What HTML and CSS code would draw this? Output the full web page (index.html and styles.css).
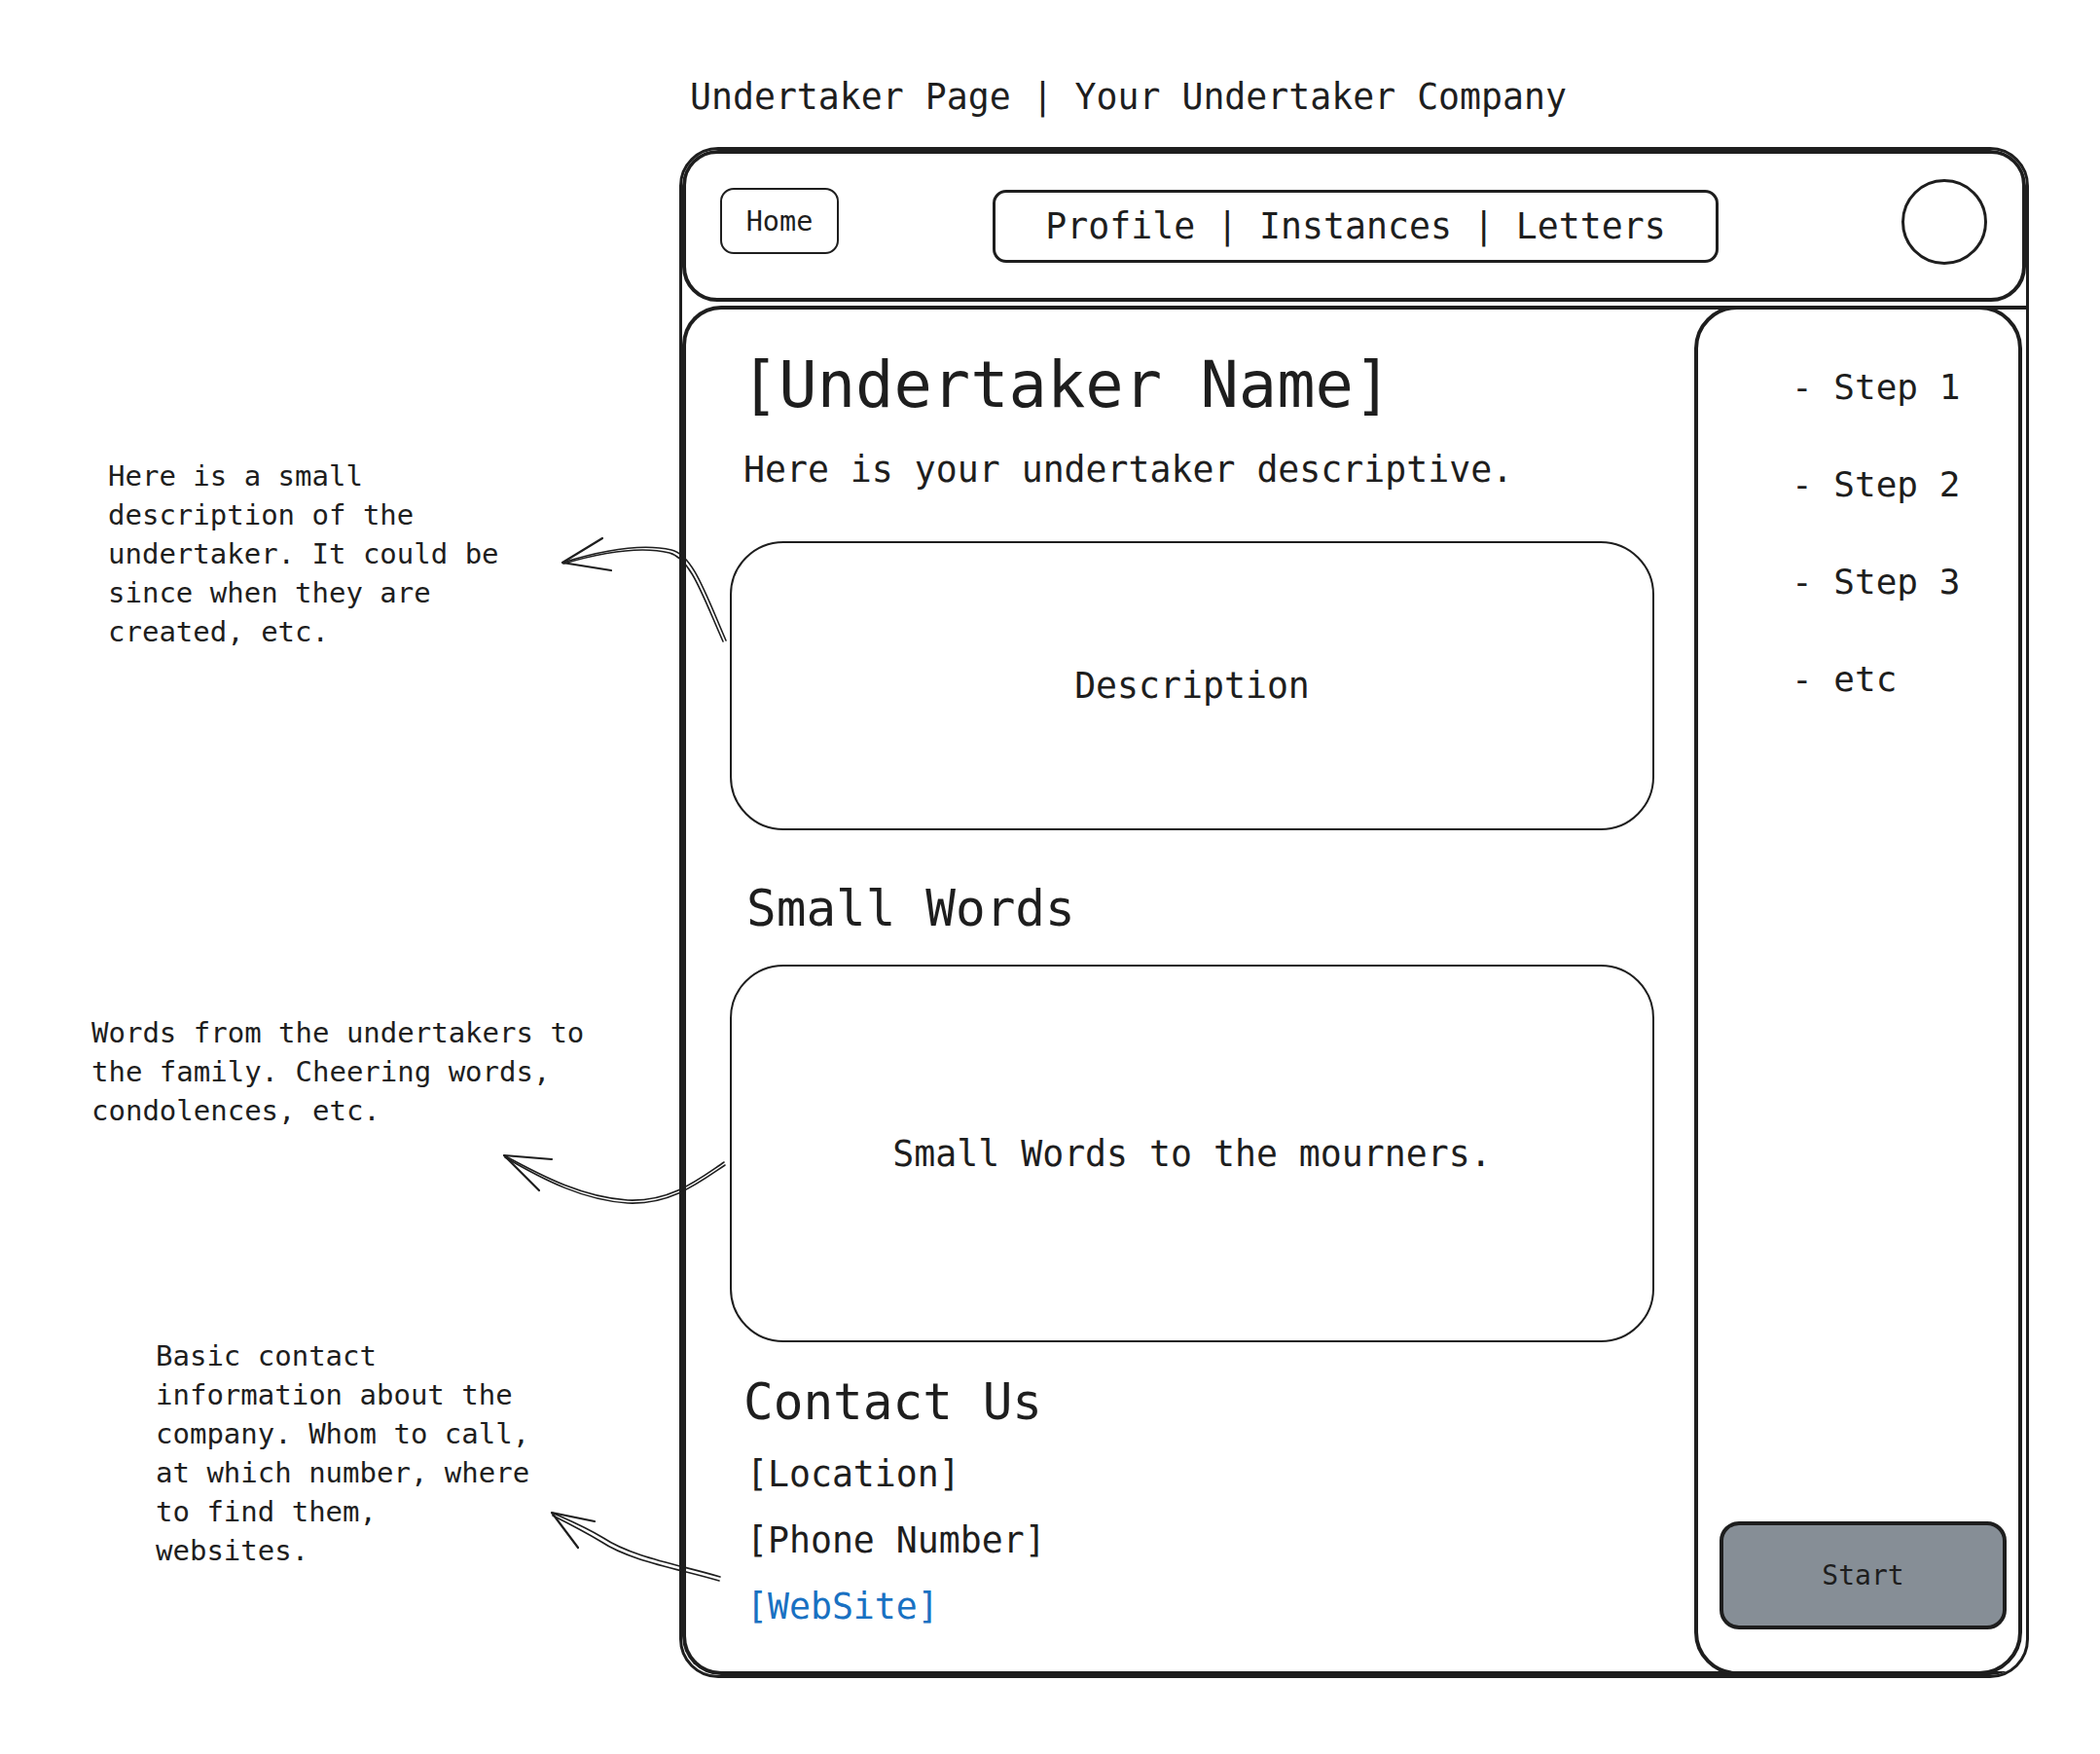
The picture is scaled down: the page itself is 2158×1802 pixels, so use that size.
FILE: index.html
```html
<!DOCTYPE html>
<html>
<head>
	<title>Undertaker Page | Your Undertaker Company</title>
	<meta name="viewport" content="width=device-width, initial-scale=1" />
	<link rel="stylesheet" href="styles.css">
</head>
<body>
	<div class="canvas">
		<aside class="notes">
			<p class="note note-about">Here is a small<br>description of the<br>undertaker. It could be<br>since when they are<br>created, etc.</p>
			<p class="note note-words">Words from the undertakers to<br>the family. Cheering words,<br>condolences, etc.</p>
			<p class="note note-contact">Basic contact<br>information about the<br>company. Whom to call,<br>at which number, where<br>to find them,<br>websites.</p>
		</aside>

		<main class="mock">
			<div class="page-title">Undertaker Page | Your Undertaker Company</div>
			<div class="frame">
				<header class="topbar">
					<button class="btn-home">Home</button>
					<nav class="nav-box">
						<a href="#">Profile</a> | <a href="#">Instances</a> | <a href="#">Letters</a>
					</nav>
					<div class="avatar"></div>
				</header>

				<div class="body">
					<section class="content">
						<h1 class="name">[Undertaker Name]</h1>
						<p class="lead">Here is your undertaker descriptive.</p>
						<div class="box box-desc">Description</div>

						<h2 class="heading heading-words">Small Words</h2>
						<div class="box box-words">Small Words to the mourners.</div>

						<h2 class="heading heading-contact">Contact Us</h2>
						<div class="contact-line">[Location]</div>
						<div class="contact-line">[Phone Number]</div>
						<a class="contact-line link" href="#">[WebSite]</a>
					</section>

					<aside class="steps">
						<ul class="step-list">
							<li>- Step 1</li>
							<li>- Step 2</li>
							<li>- Step 3</li>
							<li>- etc</li>
						</ul>
						<button class="btn-start">Start</button>
					</aside>
				</div>
			</div>
		</main>

		<!-- annotation arrows -->
		<svg class="arrows" width="2158" height="1802" viewBox="0 0 2158 1802">
			<g fill="none" stroke="#1e1e1e" stroke-width="1.6" stroke-linecap="round" stroke-linejoin="round">
				<path d="M746 658 C725 610, 712 570, 690 565 C660 558, 620 565, 578 578" />
				<path d="M743 659 C722 612, 710 574, 688 568 C660 561, 620 567, 579 579" />
				<path d="M619 553 L578 578 L628 586" stroke-width="2.2" />

				<path d="M744 1194 C720 1210, 690 1235, 645 1233 C600 1230, 560 1210, 518 1187" />
				<path d="M745 1197 C721 1213, 690 1238, 645 1236 C600 1233, 560 1213, 519 1189" />
				<path d="M567 1191 L518 1187 L554 1223" stroke-width="2.2" />

				<path d="M740 1620 C700 1608, 650 1600, 620 1580 C600 1568, 585 1562, 567 1554" />
				<path d="M739 1624 C699 1612, 648 1604, 618 1584 C598 1572, 584 1565, 568 1557" />
				<path d="M611 1563 L567 1554 L594 1590" stroke-width="2.2" />
			</g>
		</svg>
	</div>
</body>
</html>
```

FILE: styles.css
```css
body {
    margin: 0;
    background-color: #FFFFFF;
    color: #1e1e1e;
    font-family: "DejaVu Sans Mono", "Liberation Mono", monospace;
}

.canvas {
    position: relative;
    display: flex;
    width: 2158px;
    height: 1802px;
    overflow: hidden;
}

/* left side notes */
.notes {
    width: 698px;
    flex: none;
    padding-top: 469px;
    box-sizing: border-box;
}

.note {
    margin: 0;
    font-size: 29px;
    line-height: 40px;
    white-space: nowrap;
}

.note-about {
    margin-left: 111px;
}

.note-words {
    margin-left: 94px;
    margin-top: 372px;
}

.note-contact {
    margin-left: 160px;
    margin-top: 212px;
}

.arrows {
    position: absolute;
    left: 0;
    top: 0;
    pointer-events: none;
}

/* the mockup */
.mock {
    width: 1387px;
    flex: none;
    padding-top: 78px;
}

.page-title {
    font-size: 36.5px;
    line-height: 44px;
    padding-left: 11px;
    margin-bottom: 29px;
}

.frame {
    box-sizing: border-box;
    height: 1573px;
    border: 3px solid #1e1e1e;
    border-radius: 40px;
    display: flex;
    flex-direction: column;
    overflow: hidden;
}

.topbar {
    box-sizing: border-box;
    height: 156px;
    flex: none;
    border: 4px solid #1e1e1e;
    border-radius: 36px;
    display: flex;
    align-items: center;
    padding-left: 35px;
    padding-right: 36px;
}

.btn-home {
    box-sizing: border-box;
    width: 122px;
    height: 68px;
    margin-bottom: 10px;
    background-color: #FFFFFF;
    border: 2.5px solid #1e1e1e;
    border-radius: 14px;
    font-family: inherit;
    font-size: 28.5px;
    color: #1e1e1e;
    padding: 0;
}

.nav-box {
    box-sizing: border-box;
    width: 746px;
    height: 75px;
    margin-left: 158px;
    border: 3px solid #1e1e1e;
    border-radius: 14px;
    display: flex;
    align-items: center;
    justify-content: center;
    font-size: 36.5px;
    white-space: pre;
}

.nav-box a {
    color: #1e1e1e;
    text-decoration: none;
}

.avatar {
    box-sizing: border-box;
    width: 88px;
    height: 88px;
    margin-left: auto;
    margin-bottom: 9px;
    border: 3px solid #1e1e1e;
    border-radius: 50%;
}

.body {
    flex: 1;
    margin-top: 4px;
    display: flex;
    border: 4px solid #1e1e1e;
    border-right: none;
    border-radius: 40px 0 0 40px;
}

.content {
    flex: 1;
    padding-left: 45px;
    padding-top: 37px;
    display: flex;
    flex-direction: column;
    align-items: flex-start;
}

.name {
    margin: 0 0 0 11px;
    font-size: 65.4px;
    line-height: 80px;
    font-weight: normal;
}

.lead {
    margin: 26px 0 0 14px;
    font-size: 36.5px;
    line-height: 44px;
}

.box {
    box-sizing: border-box;
    width: 950px;
    border: 2px solid #1e1e1e;
    border-radius: 55px;
    display: flex;
    align-items: center;
    justify-content: center;
    font-size: 36.5px;
}

.box-desc {
    height: 297px;
    margin-top: 51px;
}

.box-words {
    height: 388px;
    margin-top: 27px;
}

.heading {
    margin: 0;
    font-size: 51px;
    line-height: 60px;
    font-weight: normal;
}

.heading-words {
    margin-top: 51px;
    margin-left: 17px;
}

.heading-contact {
    margin-top: 32px;
    margin-left: 14px;
}

.contact-line {
    margin-top: 24px;
    margin-left: 17px;
    font-size: 36.5px;
    line-height: 44px;
    color: #1e1e1e;
}

.heading-contact + .contact-line {
    margin-top: 22px;
}

.link {
    color: #1971c2;
    text-decoration: none;
}

/* right sidebar */
.steps {
    box-sizing: border-box;
    width: 337px;
    flex: none;
    margin: -4px 4px -4px 0;
    border: 4px solid #1e1e1e;
    border-radius: 44px;
    padding-top: 58px;
    display: flex;
    flex-direction: column;
}

.step-list {
    list-style: none;
    margin: 0;
    padding: 0 0 0 96px;
    font-size: 36px;
    line-height: 44px;
}

.step-list li {
    margin-bottom: 56px;
}

.btn-start {
    box-sizing: border-box;
    width: 295px;
    height: 111px;
    margin-top: auto;
    margin-bottom: 43px;
    margin-left: 22px;
    background-color: #868e96;
    border: 4px solid #1e1e1e;
    border-radius: 20px;
    font-family: inherit;
    font-size: 28px;
    color: #1e1e1e;
    padding: 0;
}
```
